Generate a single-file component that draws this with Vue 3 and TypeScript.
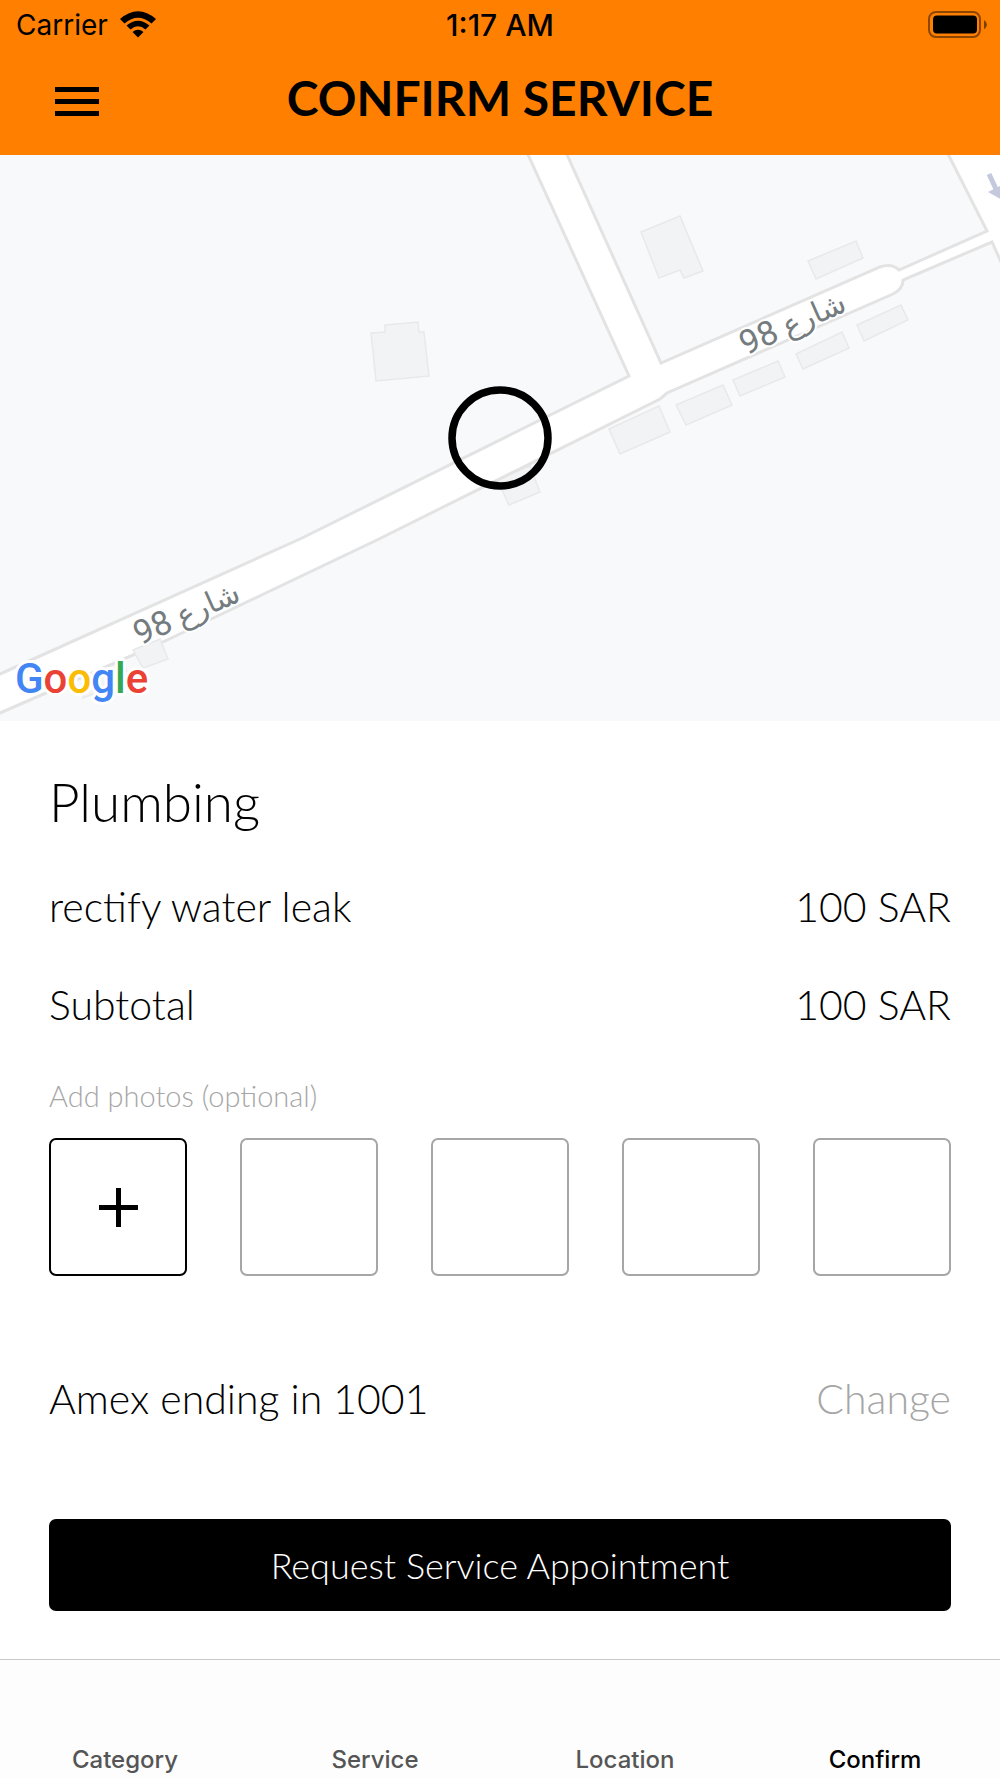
<script setup lang="ts">
import { ref } from 'vue'

interface LineItem {
  label: string
  amount: number
}

const currency = 'SAR'
const items: LineItem[] = [
  { label: 'rectify water leak', amount: 100 },
  { label: 'Subtotal', amount: 100 },
]
const emptySlots = 4
const tabs: string[] = ['Category', 'Service', 'Location', 'Confirm']
const activeTab = ref<string>('Confirm')

const buildings: string[] = [
  '641,232 680,216 703,271 684,278 680,270 659,278',
  '808,261 856,241 863,258 816,279',
  '857,325 901,305 908,320 864,341',
  '796,354 842,332 849,348 803,369',
  '733,380 778,361 785,377 740,396',
  '676,405 723,385 732,405 686,425',
  '609,429 659,406 670,432 620,454',
  '371,333 385,332 385,325 418,322 419,332 424,332 429,376 376,381',
  '497,479 530,466 540,492 509,505',
  '93,672 122,659 130,680 83,698',
]
</script>

<template>
  <div class="screen">
    <header class="header">
      <div class="status">
        <div class="carrier">
          <span>Carrier</span>
          <svg class="wifi" viewBox="0 0 36 27" aria-hidden="true">
            <path d="M0 8 Q18 -7.500 36 8 L31.500 12.500 Q18 1 4.500 12.500 Z" />
            <path d="M6.500 14.500 Q18 5 29.500 14.500 L25.500 18.500 Q18 12 10.500 18.500 Z" />
            <path d="M12.500 21 Q18 16.500 23.500 21 L18 26.500 Z" />
          </svg>
        </div>
        <span class="time">1:17 AM</span>
        <svg class="battery" viewBox="0 0 60 28" aria-hidden="true">
          <rect x="1" y="1" width="51" height="25" rx="7" fill="none" stroke="#000" stroke-opacity="0.45" stroke-width="2" />
          <rect x="5" y="4.500" width="44" height="18" rx="4" />
          <path d="M56 9 Q59 11 59 13.500 Q59 16.500 56 18.500 Z" fill-opacity="0.5" />
        </svg>
      </div>
      <div class="bar">
        <button class="menu" type="button" aria-label="Menu">
          <svg viewBox="0 0 44 29" aria-hidden="true">
            <path d="M0 0h44v5H0zM0 12h44v5H0zM0 24h44v5H0z" />
          </svg>
        </button>
        <h1>CONFIRM SERVICE</h1>
      </div>
    </header>

    <svg class="map" viewBox="0 155 1000 566" preserveAspectRatio="xMidYMid slice" role="img" aria-label="Map">
      <rect y="155" width="1000" height="566" fill="#f8f9fb" />
      <polygon
        v-for="points in buildings"
        :key="points"
        :points="points"
        fill="#f1f3f4"
        stroke="#e7e9ea"
        stroke-width="1.500"
      />
      <path
        d="M-10 678 L0 674 L300 539 L629 376 L525 148 H564 L661 363 L880 267 Q892 263 899 270 L987 231 L945 148 H1010 V282 L992 242 L903 280 Q903 289 893 294 L667 393 L660 399 L377 540 L163 642 L0 713 L-10 717 Z"
        fill="#fff"
        stroke="#e3e3e3"
        stroke-width="3"
      />
      <polygon points="133,650 160,639 168,659 143,668" fill="#f1f3f4" stroke="#e7e9ea" stroke-width="1.500" />
      <path d="M989 174 L996 189" stroke="#c5c9dd" stroke-width="5" fill="none" />
      <path d="M988 192 L1004 201 L1006 183 Z" fill="#c5c9dd" />
      <text class="street" transform="translate(797 333) rotate(-24)">شارع <tspan class="number">98</tspan></text>
      <text class="street" transform="translate(191 623) rotate(-24)">شارع <tspan class="number">98</tspan></text>
      <circle cx="500" cy="438" r="48" fill="none" stroke="#000" stroke-width="7.500" />
      <text class="brand" x="15" y="693">
        <tspan fill="#4285f4">G</tspan><tspan fill="#ea4335">o</tspan><tspan fill="#fbbc04">o</tspan><tspan fill="#4285f4">g</tspan><tspan fill="#34a853">l</tspan><tspan fill="#ea4335">e</tspan>
      </text>
    </svg>

    <main class="body">
      <h2>Plumbing</h2>
      <dl class="items">
        <div v-for="item in items" :key="item.label" class="row">
          <dt>{{ item.label }}</dt>
          <dd>{{ item.amount }} {{ currency }}</dd>
        </div>
      </dl>

      <p id="photos-label" class="hint">Add photos (optional)</p>
      <div class="photos" role="group" aria-labelledby="photos-label">
        <button class="slot add" type="button" aria-label="Add photo">
          <svg viewBox="0 0 39 39" aria-hidden="true">
            <path d="M17 0h5v17h17v5H22v17h-5V22H0v-5h17z" />
          </svg>
        </button>
        <button v-for="n in emptySlots" :key="n" class="slot" type="button" :aria-label="`Photo ${n + 1}`"></button>
      </div>

      <div class="row payment">
        <span>Amex ending in 1001</span>
        <button class="change" type="button">Change</button>
      </div>

      <button class="submit" type="button">Request Service Appointment</button>
    </main>

    <nav class="tabs">
      <a
        v-for="tab in tabs"
        :key="tab"
        href="#"
        :class="{ active: tab === activeTab }"
        @click.prevent="activeTab = tab"
      >{{ tab }}</a>
    </nav>
  </div>
</template>

<style>
body {
  margin: 0;
  background: #fff;
}
</style>

<style scoped>
.screen {
  display: flex;
  flex-direction: column;
  min-height: 100vh;
  font-family: Lato, sans-serif;
  font-weight: 300;
  color: #000;
}

button {
  margin: 0;
  padding: 0;
  border: 0;
  background: none;
  color: inherit;
  font: inherit;
  cursor: pointer;
}

svg {
  display: block;
}

.header {
  background: #ff8000;
  padding-bottom: 13px;
}

.status {
  display: grid;
  grid-template-columns: 1fr auto 1fr;
  align-items: center;
  height: 50px;
  padding: 0 12px;
  font-family: Inter, sans-serif;
  font-size: 28px;
  font-weight: 400;
}

.carrier {
  display: flex;
  align-items: center;
  gap: 12px;
  padding-left: 4px;
}

.wifi {
  width: 36px;
  height: 27px;
  padding-bottom: 2px;
}

.time {
  font-size: 30px;
  font-weight: 500;
}

.battery {
  width: 60px;
  height: 28px;
  justify-self: end;
}

.bar {
  display: grid;
  grid-template-columns: 1fr auto 1fr;
  align-items: center;
  height: 92px;
  padding: 0 55px;
}

.menu {
  justify-self: start;
  padding-top: 11px;
}

.menu svg {
  width: 44px;
  height: 29px;
}

h1 {
  margin: 0;
  padding-top: 3px;
  font-size: 48px;
  line-height: 60px;
  font-weight: 700;
}

.map {
  width: 100%;
  aspect-ratio: 1000 / 566;
}

.street {
  font-family: Roboto, "DejaVu Sans", sans-serif;
  font-size: 30px;
  font-weight: 400;
  fill: #757c80;
  stroke: #fff;
  stroke-width: 4px;
  paint-order: stroke;
  direction: rtl;
  text-anchor: middle;
}

.number {
  font-size: 34px;
}

.brand {
  font-family: Roboto, sans-serif;
  font-size: 42px;
  font-weight: 500;
  stroke: #fff;
  stroke-width: 6px;
  stroke-linejoin: round;
  paint-order: stroke;
}

.body {
  display: flex;
  flex-direction: column;
  padding: 48px 49px;
}

h2 {
  margin: 0 0 23px;
  font-size: 53px;
  line-height: 65px;
  font-weight: 300;
}

.items {
  margin: 0;
}

.row {
  display: flex;
  justify-content: space-between;
  align-items: center;
  height: 98px;
  font-size: 41px;
}

dd {
  margin: 0;
}

.hint {
  margin: 24px 0;
  font-size: 29px;
  line-height: 37px;
  color: #a6a6a6;
}

.photos {
  display: grid;
  grid-template-columns: repeat(5, 1fr);
  gap: 53px;
}

.slot {
  display: grid;
  place-items: center;
  box-sizing: border-box;
  aspect-ratio: 1;
  border: 2px solid #a6a6a6;
  border-radius: 7px;
}

.slot.add {
  border-color: #000;
}

.slot svg {
  width: 39px;
  height: 39px;
}

.payment {
  margin: 73px 0 72px;
}

.change {
  color: #a6a6a6;
}

.submit {
  height: 92px;
  border-radius: 7px;
  background: #000;
  color: #fff;
  font-size: 36px;
}

.tabs {
  display: grid;
  grid-template-columns: repeat(4, 1fr);
  flex: 1;
  align-items: end;
  border-top: 1px solid #c8c8c8;
  background: #fdfdfd;
  padding-top: 82px;
}

.tabs a {
  font-family: Inter, sans-serif;
  font-size: 24px;
  line-height: 36px;
  font-weight: 500;
  text-align: center;
  text-decoration: none;
  color: #555;
}

.tabs .active {
  color: #000;
}
</style>
